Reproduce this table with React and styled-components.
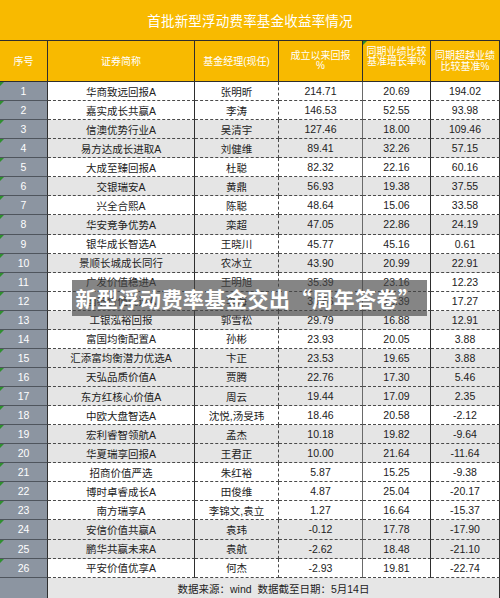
import React from "react";
import styled, { createGlobalStyle, css } from "styled-components";

const GlobalStyle = createGlobalStyle`
  html, body { margin: 0; padding: 0; background: #fff; }
  body {
    width: 500px; height: 598px; overflow: hidden;
    font-family: "Liberation Sans", "Noto Sans CJK SC", sans-serif;
  }
`;

const YELLOW = "#F8BA00";
const LINE = "#2e2e2e";

const rows = [
  ["1", "华商致远回报A", "张明昕", "214.71", "20.69", "194.02", 0],
  ["2", "嘉实成长共赢A", "李涛", "146.53", "52.55", "93.98", 0],
  ["3", "信澳优势行业A", "吴清宇", "127.46", "18.00", "109.46", 1],
  ["4", "易方达成长进取A", "刘健维", "89.41", "32.26", "57.15", 1],
  ["5", "大成至臻回报A", "杜聪", "82.32", "22.16", "60.16", 0],
  ["6", "交银瑞安A", "黄鼎", "56.93", "19.38", "37.55", 1],
  ["7", "兴全合熙A", "陈聪", "48.64", "15.06", "33.58", 0],
  ["8", "华安竞争优势A", "栾超", "47.05", "22.86", "24.19", 1],
  ["9", "银华成长智选A", "王晓川", "45.77", "45.16", "0.61", 0],
  ["10", "景顺长城成长同行", "农冰立", "43.90", "20.99", "22.91", 1],
  ["11", "广发价值稳进A", "王明旭", "35.39", "23.16", "12.23", 0],
  ["12", "国泰价值优选A", "李海", "33.66", "16.39", "17.27", 0],
  ["13", "工银泓裕回报", "郭雪松", "29.79", "16.88", "12.91", 1],
  ["14", "富国均衡配置A", "孙彬", "23.93", "20.05", "3.88", 0],
  ["15", "汇添富均衡潜力优选A", "卞正", "23.53", "19.65", "3.88", 1],
  ["16", "天弘品质价值A", "贾腾", "22.76", "17.30", "5.46", 1],
  ["17", "东方红核心价值A", "周云", "19.44", "17.09", "2.35", 1],
  ["18", "中欧大盘智选A", "沈悦,汤旻玮", "18.46", "20.58", "-2.12", 0],
  ["19", "宏利睿智领航A", "孟杰", "10.18", "19.82", "-9.64", 1],
  ["20", "华夏瑞享回报A", "王君正", "10.00", "21.64", "-11.64", 1],
  ["21", "招商价值严选", "朱红裕", "5.87", "15.25", "-9.38", 0],
  ["22", "博时卓睿成长A", "田俊维", "4.87", "25.04", "-20.17", 0],
  ["23", "南方瑞享A", "李锦文,袁立", "1.27", "16.64", "-15.37", 0],
  ["24", "安信价值共赢A", "袁玮", "-0.12", "17.78", "-17.90", 1],
  ["25", "鹏华共赢未来A", "袁航", "-2.62", "18.48", "-21.10", 1],
  ["26", "平安价值优享A", "何杰", "-2.93", "19.81", "-22.74", 0],
];

const Frame = styled.div`
  position: relative;
  width: 500px;
  height: 598px;
  overflow: hidden;
  background: #fff;
`;

const Title = styled.div`
  box-sizing: border-box;
  height: 41px;
  padding-bottom: 1px;
  background: ${YELLOW};
  border-bottom: 1px solid ${LINE};
  display: flex;
  align-items: center;
  justify-content: center;
  color: #fff;
  font-size: 13.5px;
  letter-spacing: 0.2px;
`;

const Table = styled.div`
  display: grid;
  grid-template-columns: 48px 147px 84px 84px 68px 69px;
  grid-template-rows: 41px repeat(26, 19.077px) 22px;
`;

const flag = css`
  position: relative;
  &::before {
    content: "";
    position: absolute;
    top: 0;
    left: 0;
    border-top: 4px solid #2f8f2f;
    border-right: 4px solid transparent;
  }
`;

const HeadCell = styled.div`
  box-sizing: border-box;
  background: ${YELLOW};
  color: #fff;
  font-size: 10px;
  line-height: ${(p) => p.$lh || 11}px;
  text-align: center;
  display: flex;
  align-items: center;
  justify-content: center;
  padding-bottom: ${(p) => p.$lift || 0}px;
  border-right: 1px solid ${LINE};
  border-bottom: 1px solid ${LINE};
  ${(p) => p.$flag && flag}
`;

const edges = {
  solid: `1px solid ${LINE}`,
  soft: "1px solid #6a6a6a",
  dashed: "1px dashed #4a4a4a",
};

const Cell = styled.div`
  box-sizing: border-box;
  display: flex;
  align-items: center;
  justify-content: center;
  white-space: nowrap;
  font-size: 10.5px;
  color: #222;
  background: ${(p) => (p.$shade ? "#E5E5E5" : "#fff")};
  border-bottom: 1px dashed #4a4a4a;
  border-right: ${(p) => edges[p.$edge || "solid"]};
`;

const IndexCell = styled.div`
  box-sizing: border-box;
  display: flex;
  align-items: center;
  justify-content: center;
  font-size: 10.5px;
  color: #fff;
  background: #8C95A1;
  border-right: 1px solid ${LINE};
  border-bottom: 1px solid #4f555d;
  ${(p) => p.$flag && flag}
`;

const FooterNote = styled.div`
  grid-column: 2 / 7;
  box-sizing: border-box;
  display: flex;
  align-items: flex-start;
  justify-content: center;
  padding-top: 3px;
  font-size: 10.5px;
  color: #222;
  background: #E6E6E6;
  border-right: 1px solid ${LINE};
`;

const Banner = styled.div`
  position: absolute;
  top: 280px;
  left: 72px;
  width: 355px;
  height: 36px;
  background: rgba(70, 70, 70, 0.66);
  display: flex;
  align-items: center;
  justify-content: center;
  color: #fff;
  font-family: "Noto Sans CJK SC", sans-serif;
  font-weight: 700;
  font-size: 21px;
  letter-spacing: 0.5px;
  padding-right: 4px;
  box-sizing: border-box;
`;

export default function App() {
  return (
    <Frame>
      <GlobalStyle />
      <Title>首批新型浮动费率基金收益率情况</Title>
      <Table>
        <HeadCell>序号</HeadCell>
        <HeadCell>证券简称</HeadCell>
        <HeadCell>基金经理(现任)</HeadCell>
        <HeadCell $lh={10}>成立以来回报<br />%</HeadCell>
        <HeadCell $flag $lh={10} $lift={9}>同期业绩比较<br />基准增长率%</HeadCell>
        <HeadCell $lh={11.5}>同期超越业绩<br />比较基准%</HeadCell>
        {rows.map(([no, name, mgr, ret, bench, excess, shade]) => (
          <React.Fragment key={no}>
            <IndexCell $flag>{no}</IndexCell>
            <Cell $shade={shade}>{name}</Cell>
            <Cell $shade={shade} $edge="dashed">{mgr}</Cell>
            <Cell $shade={shade} $edge="soft">{ret}</Cell>
            <Cell $shade={shade}>{bench}</Cell>
            <Cell $shade={shade}>{excess}</Cell>
          </React.Fragment>
        ))}
        <IndexCell />
        <FooterNote>数据来源：wind&nbsp;&nbsp;数据截至日期：5月14日</FooterNote>
      </Table>
      <Banner>新型浮动费率基金交出“周年答卷”</Banner>
    </Frame>
  );
}
